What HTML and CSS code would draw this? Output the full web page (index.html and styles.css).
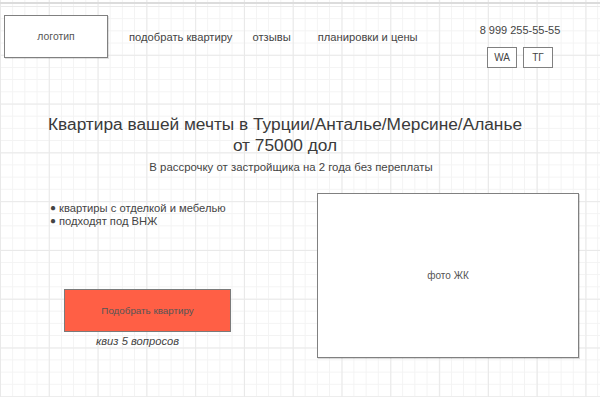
FILE: index.html
```html
<!DOCTYPE html>
<html lang="ru">
<head>
    <meta charset="UTF-8">
    <meta name="viewport" content="width=device-width, initial-scale=1.0">
    <title>Квартира в Турции</title>
    <link rel="stylesheet" href="styles.css">
</head>
<body>

<div class="page">
    <header class="header">
        <div class="logo">логотип</div>

        <nav class="nav">
            <a class="nav-link nav-pick">подобрать квартиру</a>
            <a class="nav-link nav-reviews">отзывы</a>
            <a class="nav-link nav-plans">планировки и цены</a>
        </nav>

        <div class="contacts">
            <div class="phone">8 999 255-55-55</div>
            <div class="messengers">
                <span class="msg-btn msg-wa">WA</span>
                <span class="msg-btn msg-tg">ТГ</span>
            </div>
        </div>
    </header>

    <section class="hero">
        <h1 class="hero-title">Квартира вашей мечты в Турции/Анталье/Мерсине/Аланье<br>от 75000 дол</h1>
        <p class="hero-sub">В рассрочку от застройщика на 2 года без переплаты</p>
    </section>

    <section class="offer">
        <div class="offer-left">
            <ul class="perks">
                <li>квартиры с отделкой и мебелью</li>
                <li>подходят под ВНЖ</li>
            </ul>
            <button class="cta">Подобрать квартиру</button>
            <div class="quiz">квиз 5 вопросов</div>
        </div>
        <div class="photo">фото ЖК</div>
    </section>
</div>

</body>
</html>
```

FILE: styles.css
```css
body {
    margin: 0;
    font-family: "Liberation Sans", Arial, sans-serif;
    color: #444;
    background-color: #fff;
    background-image:
        linear-gradient(to right, #e9e9e9 1px, transparent 1px),
        linear-gradient(to bottom, #e9e9e9 1px, transparent 1px),
        linear-gradient(to right, #f3f3f3 1px, transparent 1px),
        linear-gradient(to bottom, #f3f3f3 1px, transparent 1px);
    background-size: 48.8px 48.8px, 48.8px 48.8px, 12.2px 12.2px, 12.2px 12.2px;
    background-position: 0 6px, 0 6px, 0 6px, 0 6px;
    height: 397px;
    overflow: hidden;
}

.page {
    width: 600px;
    padding-top: 2px;
}

/* header */
.header {
    display: flex;
    align-items: flex-start;
    border-top: 2px solid #dcdcdc;
    padding: 11px 0 0 4px;
    height: 45px;
}

.logo {
    box-sizing: border-box;
    width: 104px;
    height: 43px;
    display: flex;
    align-items: center;
    justify-content: center;
    background: #fff;
    border: 1px solid #808080;
    box-shadow: 1px 1px 0 rgba(0,0,0,0.12);
    font-size: 10.4px;
    color: #555;
}

.nav {
    display: flex;
    align-items: center;
    height: 43px;
    margin-left: 21px;
}

.nav-link {
    font-size: 11.2px;
    color: #444;
}

.nav-reviews {
    margin-left: 20px;
}

.nav-plans {
    margin-left: 27px;
}

.contacts {
    margin-left: auto;
    margin-right: 35px;
    width: 90px;
    display: flex;
    flex-direction: column;
    align-items: center;
    padding-top: 9px;
}

.phone {
    font-size: 11px;
    line-height: 13px;
    color: #444;
}

.messengers {
    display: flex;
    gap: 6px;
    margin-top: 10px;
}

.msg-btn {
    box-sizing: border-box;
    width: 30px;
    height: 21px;
    display: flex;
    align-items: center;
    justify-content: center;
    background: #fff;
    border: 1px solid #808080;
    font-size: 10px;
    color: #444;
}

/* hero */
.hero-title {
    margin: 54px 30px 0 0;
    font-size: 17.3px;
    line-height: 20.5px;
    font-weight: 400;
    text-align: center;
    color: #3a3a3a;
}

.hero-sub {
    margin: 5px 18px 0 0;
    font-size: 11.4px;
    line-height: 14px;
    text-align: center;
    color: #444;
}

/* offer */
.offer {
    display: flex;
    margin-top: 19px;
}

.offer-left {
    box-sizing: border-box;
    width: 317px;
    padding-left: 50px;
}

.perks {
    list-style: none;
    margin: 9px 0 0;
    padding: 0;
    font-size: 11.2px;
    line-height: 13px;
    color: #444;
}

.perks li:before {
    content: "●";
    font-size: 10px;
    margin-right: 3px;
    position: relative;
    top: -1px;
}

.cta {
    display: flex;
    align-items: center;
    justify-content: center;
    box-sizing: border-box;
    width: 167px;
    height: 43px;
    margin: 61px 0 0 14px;
    padding: 0;
    background-color: #ff5f45;
    border: 1px solid #7a7a7a;
    font-family: inherit;
    font-size: 9.8px;
    color: #555;
}

.quiz {
    margin: 3px 0 0 46px;
    font-size: 11.2px;
    line-height: 13px;
    font-style: italic;
    color: #444;
}

.photo {
    box-sizing: border-box;
    width: 262px;
    height: 165px;
    display: flex;
    align-items: center;
    justify-content: center;
    background: #fff;
    border: 1px solid #808080;
    box-shadow: 1px 1px 0 rgba(0,0,0,0.15);
    font-size: 10px;
    color: #555;
}
```
